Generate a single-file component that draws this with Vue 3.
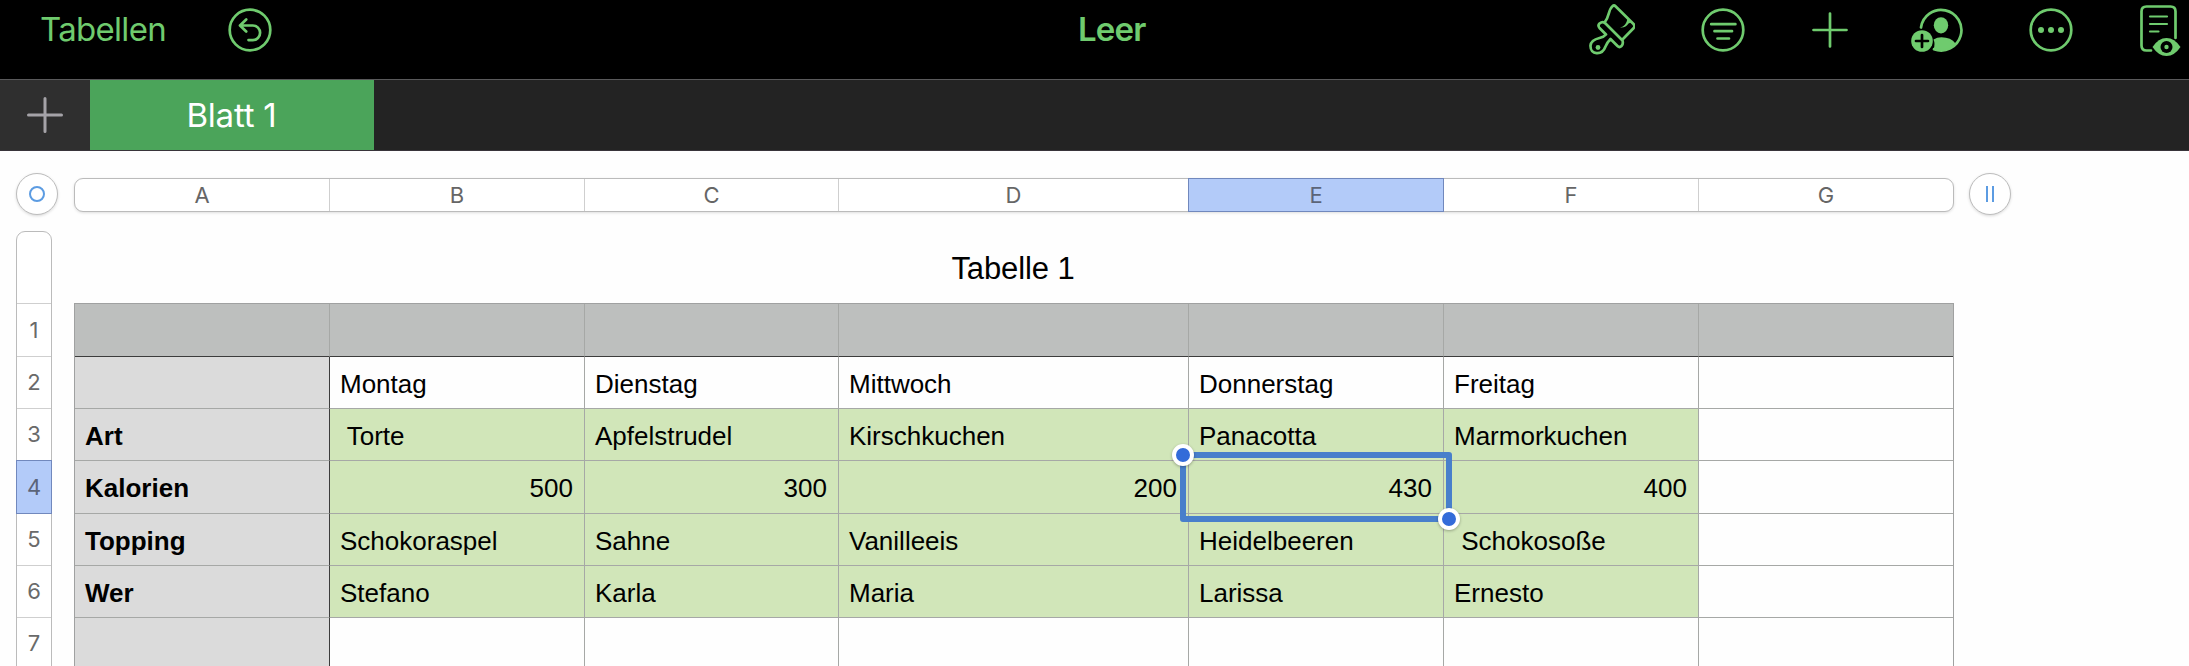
<template>
  <div class="app">
    <header class="toolbar">
      <div class="toolbar-left">
        <span class="back-link">Tabellen</span>
        <svg class="icon undo" width="44" height="44" viewBox="0 0 44 44">
          <circle cx="22" cy="22" r="20.3" />
          <path d="M18.2 11.5L12 17.5l6.2 6M12.6 17.5h12.2a7.3 7.3 0 0 1 0 14.6h-4.3" />
        </svg>
      </div>
      <h1 class="title">Leer</h1>
      <div class="toolbar-right">
        <svg class="icon brush" width="46" height="52" viewBox="0 0 46 52">
          <path d="M23.5 2.2c-4.5 3.5-2.5 10-8 16.5M23.5 2.2q1.5-1.5 3 0L44.5 20q2 2.2 0 4.3L33.5 35.500" />
          <path d="M15.5 18.5L33.5 36.5q1 3.5-1 5.500q-2 2-4 0l-7-7q-3 3-5 7.500c-3.500 9.500-15.500 8.500-15-1c.5-5 5-6.500 9-7.500q4.500-1 6.500-3.500l-6.500-6.500q-2-2.500 0-4.500q2.500-2 5-1z" />
          <path class="filled" d="M38.500 14.500c-1 5-3 8-7.500 9c4 .5 6.500-1 8.500-4l3.500-1.500z" />
          <circle class="filled" cx="9" cy="43.5" r="2.4" />
        </svg>
        <svg class="icon filter" width="44" height="44" viewBox="0 0 44 44">
          <circle cx="22" cy="22" r="20.3" />
          <path d="M10.2 16.2h24.200M13.500 23.200h17.500M16.500 30.500h11.500" />
        </svg>
        <svg class="icon add" width="36" height="36" viewBox="0 0 36 36">
          <path d="M18 1.5v33M1.5 18h33" />
        </svg>
        <svg class="icon collab" width="52" height="44" viewBox="0 0 52 44">
          <path d="M10 19.5A20.3 20.3 0 1 1 23 41.200" />
          <ellipse class="filled" cx="30" cy="17.3" rx="7.2" ry="8.1" />
          <path class="filled" d="M22.5 31.5Q26 29.3 30.5 29.3q9.500 0 14 6.200Q39 42.500 30 42.500q-4 0-7.500-1.300Q24.500 36 22.500 31.500z" />
          <circle class="filled" cx="11" cy="33" r="10.8" />
          <path class="cut" d="M11 27v12M5 33h12" />
        </svg>
        <svg class="icon more" width="44" height="44" viewBox="0 0 44 44">
          <circle cx="22" cy="22" r="20.3" />
          <circle class="filled" cx="12" cy="22" r="3" />
          <circle class="filled" cx="22" cy="22" r="3" />
          <circle class="filled" cx="32" cy="22" r="3" />
        </svg>
        <svg class="icon reader" width="42" height="52" viewBox="0 0 42 52">
          <path d="M11 45.500H6.500q-5 0-5-5V6.500q0-5 5-5h24q5 0 5 5V33" />
          <path class="thin" d="M10 11.500h17M10 19h17M10 26.500h8.500" />
          <path class="filled" d="M12.500 42Q18.500 33 26.500 33T40.500 42Q34.500 51 26.500 51T12.500 42z" />
          <circle class="hole" cx="26.5" cy="42" r="6" />
          <circle class="filled" cx="26.5" cy="42" r="2.2" />
        </svg>
      </div>
    </header>

    <nav class="tabs">
      <div class="tab-add">
        <svg width="36" height="36" viewBox="0 0 36 36">
          <path d="M18 1.5v33M1.5 18h33" />
        </svg>
      </div>
      <div class="tab active"><span>Blatt 1</span></div>
    </nav>

    <main class="sheet">
      <div class="column-bar">
        <div class="knob"><span class="ring"></span></div>
        <div class="column-heads">
          <div
            v-for="col in columns"
            :key="col"
            :class="['column-head', { selected: col === 'E' }]"
          >{{ col }}</div>
        </div>
        <div class="knob"><span class="bars"></span></div>
      </div>

      <div class="body">
        <div class="row-heads">
          <div class="row-head spacer"></div>
          <div
            v-for="(row, i) in rows"
            :key="i"
            :class="['row-head', { selected: i === 3 }]"
          >{{ i + 1 }}</div>
        </div>

        <div class="table-area">
          <h2 class="table-title">Tabelle 1</h2>
          <div class="grid">
            <template v-for="(row, r) in rows" :key="r">
              <div
                v-for="(col, c) in columns"
                :key="col"
                :class="cellClass(r, c)"
              >
                <span>{{ row[c] }}</span>
                <div v-if="r === 3 && c === 4" class="selection">
                  <i class="handle start"></i>
                  <i class="handle end"></i>
                </div>
              </div>
            </template>
          </div>
        </div>
      </div>
    </main>
  </div>
</template>

<script setup>
const columns = ['A', 'B', 'C', 'D', 'E', 'F', 'G']

const rows = [
  [],
  ['', 'Montag', 'Dienstag', 'Mittwoch', 'Donnerstag', 'Freitag'],
  ['Art', ' Torte', 'Apfelstrudel', 'Kirschkuchen', 'Panacotta', 'Marmorkuchen'],
  ['Kalorien', 500, 300, 200, 430, 400],
  ['Topping', 'Schokoraspel', 'Sahne', 'Vanilleeis', 'Heidelbeeren', ' Schokosoße'],
  ['Wer', 'Stefano', 'Karla', 'Maria', 'Larissa', 'Ernesto'],
  []
]

const cellClass = (r, c) => [
  'cell',
  {
    header: r === 0,
    label: r > 0 && c === 0,
    filled: r >= 2 && r <= 5 && c >= 1 && c <= 5,
    tall: r === 3,
    number: typeof rows[r][c] === 'number'
  }
]
</script>

<style>
body {
  margin: 0;
  overflow: hidden;
}
</style>

<style scoped>
.app {
  width: 2189px;
  height: 666px;
  overflow: hidden;
  background: #fefefe;
  font-family: Inter, "Liberation Sans", sans-serif;
}

.toolbar {
  box-sizing: border-box;
  height: 80px;
  display: grid;
  grid-template-columns: 1080px auto 1fr;
  background: #000;
  color: #6fcb6e;
  border-bottom: 1px solid #59595b;
}

.toolbar-left {
  display: flex;
  align-items: flex-start;
  padding-left: 40px;
}

.back-link {
  width: 188px;
  font-size: 33px;
  line-height: 40px;
  padding-top: 9px;
  letter-spacing: -0.7px;
}

.title {
  margin: 0 0 0 -2px;
  padding-top: 9px;
  font-size: 33px;
  line-height: 40px;
  font-weight: 600;
  letter-spacing: -0.8px;
}

.toolbar-right {
  display: flex;
  align-items: flex-start;
  justify-content: flex-end;
  padding-right: 7px;
}

.icon {
  flex: none;
  fill: none;
  stroke: #6fcb6e;
  stroke-width: 2.7;
  stroke-linecap: round;
  stroke-linejoin: round;
  margin-top: 7.5px;
}

.icon .filled {
  fill: #6fcb6e;
  stroke: none;
}

.icon .cut {
  stroke: #000;
}

.icon .thin {
  stroke-width: 2.2;
}

.icon .hole {
  fill: #000;
  stroke: none;
}

.brush {
  margin-top: 4px;
  margin-right: 66px;
}

.filter {
  margin-right: 67px;
}

.add {
  margin-top: 11.5px;
  margin-right: 63px;
}

.collab {
  margin-right: 66px;
}

.more {
  margin-right: 67px;
}

.reader {
  margin-top: 4.5px;
}

.tabs {
  box-sizing: border-box;
  height: 71px;
  display: flex;
  background: #232323;
  border-bottom: 1px solid #38343a;
}

.tab-add {
  box-sizing: border-box;
  width: 90px;
  display: flex;
  align-items: center;
  justify-content: center;
  padding-right: 1px;
  background: #2f2f2f;
}

.tab-add svg {
  fill: none;
  stroke: #a5a3a8;
  stroke-width: 3;
  stroke-linecap: round;
}

.tab {
  box-sizing: border-box;
  width: 284px;
  display: flex;
  align-items: center;
  justify-content: center;
  padding-right: 1px;
  font-size: 33px;
  letter-spacing: -0.2px;
}

.tab.active {
  background: #4ba45a;
  color: #fff;
}

.sheet {
  padding: 22px 0 0 16px;
}

.column-bar {
  display: flex;
  align-items: center;
}

.knob {
  box-sizing: border-box;
  width: 42px;
  height: 42px;
  display: flex;
  align-items: center;
  justify-content: center;
  border: 1px solid #bdbdbd;
  border-radius: 50%;
  background: #fff;
  box-shadow: 0 1px 3px rgba(0, 0, 0, 0.15);
}

.ring {
  box-sizing: border-box;
  width: 16px;
  height: 16px;
  border: 2px solid #5c9ce2;
  border-radius: 50%;
}

.bars {
  box-sizing: border-box;
  width: 8px;
  height: 16px;
  border: solid #5c9ce2;
  border-width: 0 2px;
}

.column-heads {
  box-sizing: border-box;
  width: 1880px;
  height: 34px;
  margin: 2px 15px 0 16px;
  display: grid;
  grid-template-columns: 255px 255px 254px 350px 255px 255px 254px;
  border: 1px solid #bbb;
  border-radius: 9px;
  background: #fff;
  box-shadow: 0 1px 3px rgba(0, 0, 0, 0.13);
}

.column-head {
  box-sizing: border-box;
  display: flex;
  align-items: center;
  justify-content: center;
  padding-bottom: 1px;
  border-right: 1px solid #cfcfcf;
  color: #666;
  font-size: 22px;
}

.column-head:last-child {
  border-right: 0;
}

.column-head.selected {
  margin: -1px 0 -1px -1px;
  border: 1px solid #7188bd;
  background: #b3cbf9;
  color: #5b6478;
}

.body {
  display: flex;
  margin-top: 16px;
}

.row-heads {
  box-sizing: border-box;
  width: 36px;
  height: 460px;
  border: 1px solid #bbb;
  border-radius: 9px;
  background: #fff;
}

.row-head {
  box-sizing: border-box;
  height: 52px;
  display: flex;
  align-items: center;
  justify-content: center;
  padding-bottom: 1px;
  border-bottom: 1px solid #cfcfcf;
  color: #6a6a6a;
  font-size: 22px;
}

.row-head:nth-child(2) {
  height: 53px;
}

.row-head.spacer {
  height: 72px;
}

.row-head.selected {
  height: 54px;
  margin: -1px -1px 0;
  border: 1px solid #7188bd;
  background: #b3cbf9;
  color: #5b6478;
}

.table-area {
  width: 1880px;
  margin-left: 22px;
  font-family: "Liberation Sans", Arial, sans-serif;
  color: #000;
}

.table-title {
  box-sizing: border-box;
  margin: 0;
  height: 72px;
  padding-right: 2px;
  font-size: 31px;
  font-weight: 400;
  line-height: 76px;
  letter-spacing: -0.1px;
  text-align: center;
}

.grid {
  display: grid;
  grid-template-columns: 255px 255px 254px 350px 255px 255px 254px;
  grid-template-rows: 53px 52px 52px 53px 52px 52px 53px;
  border: 1px solid #a0a1a1;
}

.cell {
  box-sizing: border-box;
  position: relative;
  display: flex;
  align-items: center;
  padding: 4px 11px 0 10px;
  border-right: 1px solid #a6a8a6;
  border-bottom: 1px solid #a6a8a6;
  background: #fefefe;
  font-size: 26px;
  white-space: pre;
}

.cell:nth-child(7n) {
  border-right: 0;
}

.cell.header {
  background: #bdbfbe;
  border-bottom-color: #3c3c3c;
}

.cell.label {
  background: #dbdbdb;
  border-right-color: #3c3c3c;
  font-weight: 700;
}

.cell.filled {
  background: #d1e6b9;
}

.cell.tall {
  padding-top: 2px;
}

.cell.number {
  justify-content: flex-end;
}

/* The frame overlaps the neighbouring cells on all sides */
.selection {
  position: absolute;
  z-index: 1;
  top: -9px;
  right: -9px;
  bottom: -9px;
  left: -9px;
  border: 6px solid #487fcb;
  border-radius: 3px;
}

.handle {
  box-sizing: border-box;
  position: absolute;
  width: 22px;
  height: 22px;
  border: 4px solid #fff;
  border-radius: 50%;
  background: #336bd9;
  box-shadow: 0 1px 3px rgba(0, 0, 0, 0.3);
}

.handle.start {
  top: -14px;
  left: -14px;
}

.handle.end {
  right: -14px;
  bottom: -14px;
}
</style>
